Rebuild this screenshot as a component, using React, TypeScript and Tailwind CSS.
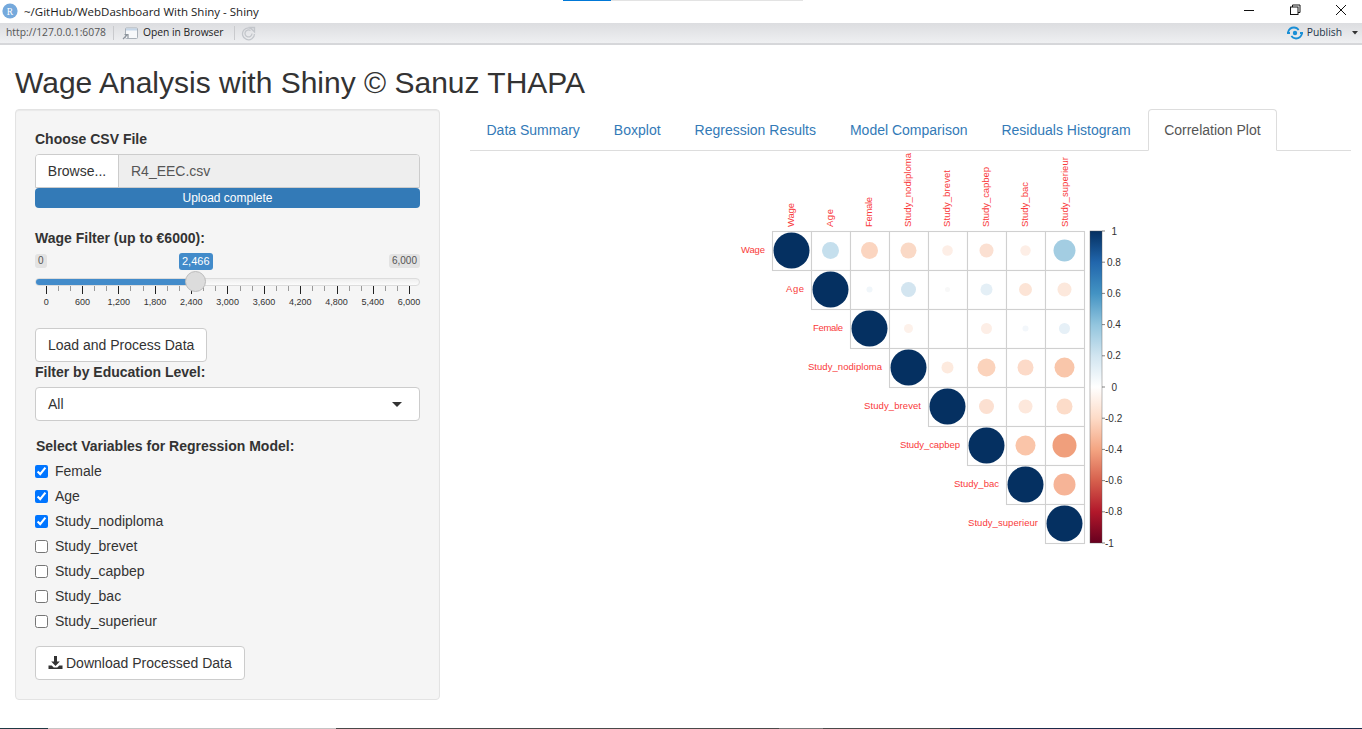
import React from "react";

const names = ["Wage","Age","Female","Study_nodiploma","Study_brevet","Study_capbep","Study_bac","Study_superieur"];
const labelLen = [24,18,30,74,57,60,45,70];
const cell = 39;
const x0 = 772;
const y0 = 231;

// upper-triangle cells: [radius, colour] per row, starting at the diagonal
const cells: [number, string][][] = [
  [[18,"#053061"],[8.5,"#c5dfed"],[8.5,"#fbd5c0"],[8,"#fad9c6"],[5.3,"#fdeee6"],[7,"#fbe0d2"],[5.2,"#fdeee6"],[11,"#a3cde2"]],
  [[18,"#053061"],[3,"#f0f6fa"],[7.5,"#d3e5f0"],[2.5,"#f8f8f8"],[6,"#e4eff6"],[6.5,"#fce4d6"],[7,"#fce8dc"]],
  [[18,"#053061"],[4.5,"#fdf1ea"],[0,"#fff"],[5.5,"#fdeee6"],[3,"#f3f7fb"],[5.5,"#e6f0f7"]],
  [[18,"#053061"],[6,"#fdeade"],[9,"#fbd3bc"],[8,"#fcdac8"],[10,"#f9c6aa"]],
  [[18,"#053061"],[7.5,"#fce0d1"],[7,"#fde8dc"],[8,"#fcdcc9"]],
  [[18,"#053061"],[10,"#fac5a9"],[12,"#f09f7c"]],
  [[18,"#053061"],[11,"#f6b497"]],
  [[18,"#053061"]],
];

const barLabels = ["1","0.8","0.6","0.4","0.2","0","-0.2","-0.4","-0.6","-0.8","-1"];
const stops = ["#053061","#2166ac","#4393c3","#92c5de","#d1e5f0","#ffffff","#fddbc7","#f4a582","#d6604d","#b2182b","#67001f"];

function CorrPlot() {
  // svg origin sits at page (700,150)
  return (
    <svg width="440" height="400" viewBox="700 150 440 400" className="block" style={{ fontFamily: '"Liberation Sans", Arial, sans-serif' }}>
      <defs>
        <linearGradient id="rdbu" x1="0" y1="0" x2="0" y2="1">
          {stops.map((c, i) => <stop key={i} offset={i / 10} stopColor={c} />)}
        </linearGradient>
      </defs>
      {names.map((n, i) => {
        const cx = x0 + 39.15 * i + 18.5;
        return (
          <text key={n} transform={`translate(${cx + 3},227) rotate(-90)`} fontSize="9.5" fill="#f93a3a" textLength={labelLen[i]} lengthAdjust="spacing">{n}</text>
        );
      })}
      {names.map((n, i) => (
        <text key={n} x={x0 + cell * i - 7} y={y0 + cell * i + 22} fontSize="9.5" fill="#f93a3a" textAnchor="end" textLength={labelLen[i]} lengthAdjust="spacing">{n}</text>
      ))}
      {cells.map((row, r) =>
        row.map(([rad, col], k) => {
          const cL = r + k;
          const x = x0 + cell * cL;
          const y = y0 + cell * r;
          return (
            <g key={`${r}-${k}`}>
              <rect x={x + 0.5} y={y + 0.5} width={cell} height={cell} fill="#fff" stroke="#d0d0d0" strokeWidth="1.1" />
              {rad > 0 && <circle cx={x + cell / 2} cy={y + cell / 2} r={rad} fill={col} />}
            </g>
          );
        })
      )}
      <rect x="1090" y="231" width="12" height="312" fill="url(#rdbu)" stroke="#555" strokeWidth="0.4" />
      {barLabels.map((t, i) => {
        const y = 231 + i * 31.2;
        return (
          <g key={t}>
            <line x1="1102" x2="1105" y1={y} y2={y} stroke="#333" strokeWidth="0.6" />
            <text x={t.startsWith("-") ? 1105 : t.length > 1 ? 1107 : 1111.5} y={y + 3.5} fontSize="10" fill="#333">{t}</text>
          </g>
        );
      })}
    </svg>
  );
}

function TitleBar() {
  return (
    <div className="relative flex h-[23px] items-center bg-white pl-[2px]">
      <div className="absolute left-[563px] top-0 h-px w-[48px] bg-[#0078d7]" />
      <div className="absolute left-[611px] top-0 h-px w-[192px] bg-[#e3e3e3]" />
      <svg width="16" height="16" viewBox="0 0 16 16" className="mt-[-1px] shrink-0">
        <circle cx="8" cy="8" r="7.6" fill="#75a9dc" />
        <text x="8" y="11.5" textAnchor="middle" fontSize="9.5" fill="#fff" fontFamily='"Liberation Serif", serif'>R</text>
      </svg>
      <span className="ml-[6px] text-[11.5px] leading-none text-[#1a1a1a] font-['Open_Sans',sans-serif]">~/GitHub/WebDashboard With Shiny - Shiny</span>
      <div className="ml-auto flex items-center">
        <svg width="12" height="12" viewBox="0 0 12 12" className="mr-[34px] mt-[-4px]"><path d="M1 6.5h10" stroke="#111" strokeWidth="1" /></svg>
        <svg width="12" height="12" viewBox="0 0 12 12" className="mr-[34px] mt-[-3px]" fill="none" stroke="#111" strokeWidth="1"><rect x="1.5" y="3" width="7.5" height="7.5" /><path d="M3.5 3V1h7.5v7.5H9" /></svg>
        <svg width="12" height="12" viewBox="0 0 12 12" className="mr-[15px] mt-[-3px]" fill="none" stroke="#111" strokeWidth="1"><path d="M1 1l10 10M11 1L1 11" /></svg>
      </div>
    </div>
  );
}

function ToolBar() {
  return (
    <div className="flex h-[22px] items-center border-b-2 border-[#d6d7da] bg-gradient-to-b from-[#dcdde0] to-[#eff0f2] pl-[6px] text-[10.3px] font-['Open_Sans',sans-serif]">
      <span className="text-[#555]">http://127.0.0.1:6078</span>
      <div className="ml-[7px] h-[14px] w-px bg-[#c9cacd]" />
      <svg width="16" height="13" viewBox="0 0 16 13" className="ml-[8px]" fill="none">
        <rect x="3.5" y="1" width="12" height="10.5" rx="1" fill="#f7f8fa" stroke="#a9b0b8" />
        <path d="M4 1.5h11v2H4z" fill="#c5d6e8" />
        <path d="M1 12l4-4M2.5 7.5H6V11" stroke="#8e959d" strokeWidth="1.2" />
      </svg>
      <span className="ml-[5px] text-[#1c1c1c]">Open in Browser</span>
      <div className="ml-[10px] h-[14px] w-px bg-[#c9cacd]" />
      <svg width="15" height="15" viewBox="0 0 15 15" className="ml-[6px]" fill="none" stroke="#c3c6cb" strokeWidth="1.3">
        <path d="M12.5 4.5A6 6 0 1 0 13.5 8" />
        <path d="M11 7.5A3.5 3.5 0 1 1 9.5 4.5" />
        <path d="M9 1.5h4.5V6z" fill="#dfe1e4" />
      </svg>
      <div className="ml-auto flex items-center">
        <svg width="16" height="14" viewBox="0 0 16 14" fill="none" stroke="#1a8fd6" strokeWidth="1.8">
          <path d="M1 6.2C2 3 4.5 1.5 7 1.5c2.2 0 3.7 1 4.6 2.6" />
          <path d="M15 7.8c-1 3.2-3.5 4.7-6 4.7-2.2 0-3.7-1-4.6-2.6" />
          <path d="M0 7h3M13 7h3" />
          <circle cx="8" cy="7" r="2.2" fill="#1a8fd6" stroke="none" />
        </svg>
        <span className="ml-[4px] text-[#24364a]">Publish</span>
        <svg width="6" height="4" viewBox="0 0 6 4" className="ml-[10px] mr-[4px]"><path d="M0 0h6L3 3.5z" fill="#333" /></svg>
      </div>
    </div>
  );
}

const btn = "inline-flex h-[34px] items-center rounded-[4px] border border-[#ccc] bg-white px-[12px] text-[14px] leading-[20px] text-[#333]";
const lbl = "block text-[14px] font-bold leading-[20px] text-[#333]";

function Slider() {
  const ticks = Array.from({ length: 31 }, (_, i) => i);
  const labels = ["0","600","1,200","1,800","2,400","3,000","3,600","4,200","4,800","5,400","6,000"];
  return (
    <div className="relative mt-[6px] h-[60px]">
      <div className="flex justify-between">
        <span className="rounded-[3px] bg-[#e3e3e3] px-[3px] text-[10px] leading-[14px] text-[#555]">0</span>
        <span className="rounded-[3px] bg-[#e3e3e3] px-[3px] text-[10px] leading-[14px] text-[#555]">6,000</span>
      </div>
      <div className="mt-[10px] h-[8px] overflow-hidden rounded-[4px] border border-[#dcdcdc] bg-gradient-to-b from-[#eee] to-[#fcfcfc]">
        <div className="h-full w-[160px] bg-[#428bca]" />
      </div>
      <div className="ml-[10.5px] mr-[9.5px] flex items-start justify-between">
        {ticks.map((i) => (
          <div key={i} className={i % 3 === 0 ? "h-[8px] w-px bg-[#222]" : "h-[5px] w-px bg-[#999]"} />
        ))}
      </div>
      <div className="-ml-[7px] mt-[3px] flex w-[400px] text-[9px] leading-[11px] text-[#333]">
        {labels.map((l) => (
          <span key={l} className="w-[36.3px] shrink-0 text-center">{l}</span>
        ))}
      </div>
      <div className="absolute left-[144px] top-[-1px] rounded-[3px] bg-[#428bca] px-[3px] text-[11px] leading-[17px] text-white">2,466</div>
      <div className="absolute left-[149.5px] top-[17px] h-[21px] w-[21px] rounded-full border border-[#bbb] bg-[#dcdcdc]" />
    </div>
  );
}

function Sidebar() {
  const vars: [string, boolean][] = [["Female",true],["Age",true],["Study_nodiploma",true],["Study_brevet",false],["Study_capbep",false],["Study_bac",false],["Study_superieur",false]];
  return (
    <div className="h-[591px] w-[425px] shrink-0 rounded-[4px] border border-[#e3e3e3] bg-[#f5f5f5] px-[19px] pt-[19px] shadow-[inset_0_1px_1px_rgba(0,0,0,0.05)]">
      <label className={lbl}>Choose CSV File</label>
      <div className="mt-[5px] flex h-[34px] overflow-hidden rounded-t-[4px] border border-[#ccc] text-[14px] leading-[20px]">
        <div className="flex w-[83px] items-center justify-center border-r border-[#ccc] bg-white text-[#333]">Browse...</div>
        <div className="flex flex-1 items-center bg-[#eee] pl-[12px] text-[#555]">R4_EEC.csv</div>
      </div>
      <div className="flex h-[20px] items-center justify-center rounded-[4px] bg-[#337ab7] text-[12px] text-white">Upload complete</div>

      <label className={`${lbl} mt-[20px]`}>Wage Filter (up to €6000):</label>
      <Slider />

      <button className={`${btn} mt-[14px]`}>Load and Process Data</button>
      <label className={lbl}>Filter by Education Level:</label>
      <div className="mt-[5px] flex h-[34px] items-center justify-between rounded-[4px] border border-[#ccc] bg-white pl-[12px] pr-[17px] text-[14px] text-[#333]">
        <span>All</span>
        <svg width="10" height="5" viewBox="0 0 10 5"><path d="M0 0h10L5 5z" fill="#333" /></svg>
      </div>

      <label className={`${lbl} ml-px mt-[15px]`}>Select Variables for Regression Model:</label>
      <div className="mt-[2.5px] flex flex-col">
        {vars.map(([v, c]) => (
          <label key={v} className="flex h-[25px] items-center text-[14px] text-[#333]">
            <input type="checkbox" defaultChecked={c} className="m-0 h-[13px] w-[13px] accent-[#0075ff]" />
            <span className="ml-[7px]">{v}</span>
          </label>
        ))}
      </div>
      <button className={`${btn} mt-[12px]`}>
        <svg width="15" height="15" viewBox="0 0 15 15" className="mr-[3px]">
          <path d="M6 1h3v5.5h2.8L7.5 11 3.2 6.5H6z" fill="#333" />
          <path d="M0.5 10.5h3.2l2 2h3.6l2-2h3.2v3.5H0.5z" fill="#333" />
        </svg>
        Download Processed Data
      </button>
    </div>
  );
}

function Tabs() {
  const tabs = ["Data Summary","Boxplot","Regression Results","Model Comparison"];
  return (
    <div className="flex border-b border-[#ddd] pl-[0.5px] text-[14px] leading-[20px]">
      {tabs.map((t) => (
        <div key={t} className="mr-[2px] border border-transparent px-[15px] pb-[9px] pt-[10px] text-[#337ab7]">{t}</div>
      ))}
      <div className="mr-[1.5px] border border-transparent px-[15px] pb-[9px] pt-[10px] text-[#337ab7]">Residuals Histogram</div>
      <div className="mb-[-1px] rounded-t-[4px] border border-[#ddd] border-b-white bg-white px-[15px] pb-[10px] pt-[10px] text-[#555]">Correlation Plot</div>
    </div>
  );
}

function BottomEdge() {
  return (
    <div className="absolute bottom-0 left-0 flex h-px w-full">
      <div className="w-[48px] bg-[#1f3a44]" />
      <div className="w-[288px] bg-[#c4c4c4]" />
      <div className="w-[443px] bg-[#4a4a4a]" />
      <div className="w-[44px] bg-[#777]" />
      <div className="w-[127px] bg-[#4a4a4a]" />
      <div className="flex-1 bg-[#1b2a4a]" />
    </div>
  );
}

export default function App() {
  return (
    <div className="relative h-[729px] w-[1362px] overflow-hidden bg-white font-['Liberation_Sans',Arial,sans-serif]">
      <TitleBar />
      <ToolBar />
      <div className="px-[15px]">
        <h2 className="pt-[21px] text-[30px] font-normal leading-[33px] text-[#333]">Wage Analysis with Shiny © Sanuz THAPA</h2>
        <div className="mt-[10px] flex">
          <Sidebar />
          <div className="ml-[30px] w-[881px] shrink-0">
            <Tabs />
            <div className="-mt-px ml-[230px]">
              <CorrPlot />
            </div>
          </div>
        </div>
      </div>
      <BottomEdge />
    </div>
  );
}
